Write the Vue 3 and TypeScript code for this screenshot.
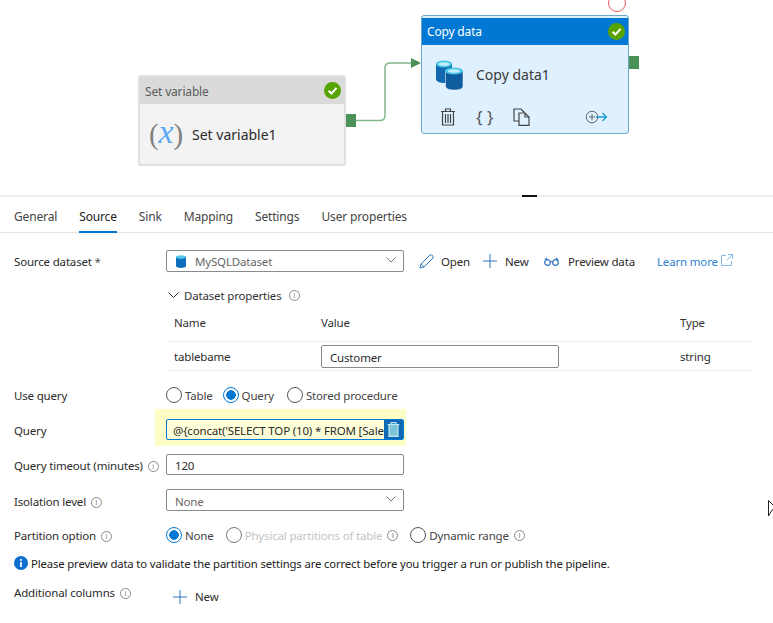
<script setup lang="ts">
const tabs = ['General', 'Source', 'Sink', 'Mapping', 'Settings', 'User properties']
const activeTab = 'Source'
const useQueryOptions = [
  { label: 'Table', checked: false },
  { label: 'Query', checked: true },
  { label: 'Stored procedure', checked: false },
]
</script>

<template>
  <div class="page">
    <section class="canvas">
      <svg class="wire" width="90" height="70" viewBox="0 0 90 70">
        <path d="M0 60.5 H24 Q29 60.5 29 55.5 V8 Q29 3 34 3 H56" fill="none" stroke="#7fb78b" stroke-width="1.5" />
        <path d="M55 -2 L65 3 L55 8 Z" fill="#4a9158" />
      </svg>
      <span class="port port-a"></span>
      <span class="port port-b"></span>
      <span class="red-ring"></span>

      <div class="node node-set">
        <div class="node-head">
          <span>Set variable</span>
          <svg class="ok" width="17" height="17" viewBox="0 0 17 17">
            <circle cx="8.5" cy="8.5" r="8.5" fill="#57a300" />
            <path d="M4.6 8.7 L7.4 11.5 L12.6 5.8" fill="none" stroke="#fff" stroke-width="2" />
          </svg>
        </div>
        <div class="node-body set-body">
          <span class="fx"><i class="paren">(</i><i class="x">x</i><i class="paren">)</i></span>
          <span class="node-name">Set variable1</span>
        </div>
      </div>

      <div class="node node-copy">
        <div class="node-head copy-head">
          <span>Copy data</span>
          <svg class="ok" width="17" height="17" viewBox="0 0 17 17">
            <circle cx="8.5" cy="8.5" r="8.5" fill="#57a300" />
            <path d="M4.6 8.7 L7.4 11.5 L12.6 5.8" fill="none" stroke="#fff" stroke-width="2" />
          </svg>
        </div>
        <div class="copy-body">
          <div class="copy-title">
            <svg width="28" height="30" viewBox="0 0 28 30">
              <path d="M0 4 V19 C0 22 5 23 8 23 C12 23 16 22 16 19 V4 Z" fill="#1268ae" />
              <ellipse cx="8" cy="4" rx="8" ry="3.4" fill="#48c7e6" />
              <ellipse cx="8" cy="4" rx="5.5" ry="1.8" fill="#c4eef8" />
              <path d="M9.500 11 V26 C9.500 29 14 30 18 30 C23 30 27 29 27 26 V11 Z" fill="#0f5c9e" stroke="#dff0fe" stroke-width="0.6" />
              <ellipse cx="18" cy="11" rx="9" ry="3.4" fill="#48c7e6" />
              <ellipse cx="18" cy="11" rx="6" ry="1.8" fill="#c4eef8" />
            </svg>
            <span class="node-name copy-name">Copy data1</span>
          </div>
          <div class="copy-actions">
            <svg width="16" height="18" viewBox="0 0 16 18" fill="none" stroke="#444" stroke-width="1.200">
              <path d="M1 3.500 H15 M5.500 3.500 V1 H10.500 V3.500 M2.500 3.500 V17 H13.500 V3.500 M5.500 6 V15 M8 6 V15 M10.500 6 V15" />
            </svg>
            <span class="braces">{ }</span>
            <svg class="copy-doc" width="17" height="18" viewBox="0 0 17 18" fill="none" stroke="#444" stroke-width="1.200">
              <path d="M1 1 H8 L11 4 V13 H1 Z" />
              <path d="M6 5 H12 L16 9 V17.300 H6 Z" fill="#dff0fe" />
              <path d="M12 5 V9 H16" />
            </svg>
            <svg class="add-out" width="23" height="14" viewBox="0 0 23 14" fill="none">
              <circle cx="7" cy="7" r="5.800" stroke="#666" />
              <path d="M4 7 H10 M7 4 V10" stroke="#666" />
              <path d="M11 7 H21 M17.500 3 L21.500 7 L17.500 11" stroke="#1a9bd0" stroke-width="1.300" />
            </svg>
          </div>
        </div>
      </div>
      <span class="resize-mark"></span>
    </section>

    <nav class="tabs">
      <span v-for="t in tabs" :key="t" class="tab" :class="{ active: t === activeTab }">{{ t }}</span>
    </nav>

    <div class="form">
      <div class="row row-source">
        <label>Source dataset <em>*</em></label>
        <div class="field select">
          <svg width="10" height="13" viewBox="0 0 10 13" class="sql-icon">
            <path d="M0 2 V11 C0 12.300 2.500 13 5 13 C7.500 13 10 12.300 10 11 V2 Z" fill="#0f6cbd" />
            <ellipse cx="5" cy="2" rx="5" ry="1.800" fill="#50c8e8" />
          </svg>
          <span class="muted">MySQLDataset</span>
          <svg class="chev" width="10" height="6" viewBox="0 0 10 6"><path d="M.5 .5 L5 5 L9.500 .5" fill="none" stroke="#777" /></svg>
        </div>
        <div class="actions">
          <span class="act act-open">
            <svg width="15" height="15" viewBox="0 0 15 15" fill="none" stroke="#2f74c0">
              <path d="M1 14 L2 10 L11 1 Q12 .3 13.500 1.500 Q14.500 3 14 4 L5 13 Z M2 10 L5 13" />
            </svg>
            Open
          </span>
          <span class="act act-new">
            <svg width="14" height="14" viewBox="0 0 14 14" stroke="#2f74c0"><path d="M7 0 V14 M0 7 H14" /></svg>
            New
          </span>
          <span class="act act-preview">
            <svg width="15" height="9" viewBox="0 0 15 9" fill="none" stroke="#2f74c0" stroke-width="1.200">
              <circle cx="3.500" cy="5.500" r="2.800" /><circle cx="11.500" cy="5.500" r="2.800" />
              <path d="M6.300 5 Q7.500 4 8.700 5 M1 3 L3 .8 M14 3 L12 .8" />
            </svg>
            Preview data
          </span>
          <span class="learn">
            Learn more
            <svg width="12" height="12" viewBox="0 0 12 12" fill="none" stroke="#8ab8e6">
              <path d="M5 1.500 H.5 V11.500 H10.500 V7 M7 .5 H11.500 V5 M11.500 .5 L6 6" />
            </svg>
          </span>
        </div>
      </div>

      <div class="ds-toggle">
        <svg width="11" height="7" viewBox="0 0 11 7"><path d="M.5 .5 L5.500 5.500 L10.500 .5" fill="none" stroke="#333" /></svg>
        <span>Dataset properties</span>
        <i class="info">i</i>
      </div>

      <div class="props">
        <div class="props-row props-head">
          <span class="c-name">Name</span><span class="c-value">Value</span><span>Type</span>
        </div>
        <div class="props-row props-data">
          <span class="c-name">tablebame</span>
          <span class="c-value"><span class="field value-input">Customer</span></span>
          <span>string</span>
        </div>
      </div>

      <div class="row row-use">
        <label>Use query</label>
        <div class="radios">
          <span v-for="o in useQueryOptions" :key="o.label" class="radio" :class="{ on: o.checked }">
            <b></b>{{ o.label }}
          </span>
        </div>
      </div>

      <div class="row row-query">
        <label>Query</label>
        <div class="query-wrap">
          <div class="field query-input">
            <span class="query-text">@{concat('SELECT TOP (10) * FROM [SalesLT].[Customer]')}</span>
            <span class="query-del">
              <svg width="13" height="15" viewBox="0 0 13 15" fill="none" stroke="#bfe6f2" stroke-width="1.200">
                <path d="M.5 2.500 H12.500 M4 2.500 V.6 H9 V2.500" />
                <path d="M2 2.500 V14.400 H11 V2.500 Z" fill="#7cc6d8" />
              </svg>
            </span>
          </div>
        </div>
      </div>

      <div class="row row-timeout">
        <label>Query timeout (minutes) <i class="info">i</i></label>
        <div class="field plain">120</div>
      </div>

      <div class="row row-iso">
        <label>Isolation level <i class="info">i</i></label>
        <div class="field select iso">
          <span class="muted">None</span>
          <svg class="chev" width="10" height="6" viewBox="0 0 10 6"><path d="M.5 .5 L5 5 L9.500 .5" fill="none" stroke="#777" /></svg>
        </div>
      </div>

      <div class="row row-part">
        <label>Partition option <i class="info">i</i></label>
        <div class="radios">
          <span class="radio on"><b></b>None</span>
          <span class="radio off"><b></b>Physical partitions of table <i class="info">i</i></span>
          <span class="radio"><b></b>Dynamic range <i class="info">i</i></span>
        </div>
      </div>

      <div class="notice">
        <svg width="14" height="14" viewBox="0 0 14 14">
          <circle cx="7" cy="7" r="7" fill="#0f6fd0" />
          <path d="M7 3 V4.800 M7 6 V11" stroke="#fff" stroke-width="1.800" />
        </svg>
        <span>Please preview data to validate the partition settings are correct before you trigger a run or publish the pipeline.</span>
      </div>

      <div class="row row-extra">
        <label>Additional columns <i class="info">i</i></label>
        <span class="act add-col">
          <svg width="14" height="14" viewBox="0 0 14 14" stroke="#2f74c0"><path d="M7 0 V14 M0 7 H14" /></svg>
          New
        </span>
      </div>
    </div>

    <svg class="cursor" width="9" height="19" viewBox="0 0 9 19" fill="#fff" stroke="#222">
      <path d="M.5 .5 L9 9 L4 10 L.5 16 Z" />
    </svg>
  </div>
</template>

<style scoped>
.page {
  position: relative;
  width: 773px;
  height: 623px;
  overflow: hidden;
  background: #fff;
  color: #2b2b2b;
  font-family: "Noto Sans", "Open Sans", sans-serif;
  font-size: 11.5px;
  letter-spacing: -0.17px;
}

/* canvas */
.canvas {
  position: relative;
  height: 195px;
  border-bottom: 2px solid #eeeeee;
  box-sizing: content-box;
}

.wire {
  position: absolute;
  left: 356px;
  top: 60px;
  overflow: visible;
}

.port {
  position: absolute;
  width: 10px;
  height: 13px;
  background: #4a9158;
}
.port-a { left: 346px; top: 114px; }
.port-b { left: 629px; top: 56px; }

.red-ring {
  position: absolute;
  left: 608px;
  top: -6px;
  width: 16px;
  height: 16px;
  border: 1.500px solid #ee5a60;
  border-radius: 50%;
}

.node {
  position: absolute;
  box-sizing: border-box;
  width: 208px;
  border-radius: 3px;
  overflow: hidden;
}

.node-head {
  display: flex;
  align-items: center;
  justify-content: space-between;
  padding: 0 3px 0 5px;
  font-size: 12px;
}

.node-set {
  left: 138px;
  top: 75px;
  height: 91px;
  border: 2px solid #e0e0e0;
  background: #f3f3f3;
}
.node-set .node-head {
  height: 27px;
  background: #dadada;
  color: #5a5a5a;
}
.node-set .node-head span { padding-top: 2px; }

.set-body {
  display: flex;
  align-items: center;
  height: 60px;
  padding-left: 9px;
}

.fx {
  display: flex;
  align-items: center;
  width: 43px;
  font-family: "Liberation Serif", serif;
  font-size: 29px;
  font-style: italic;
}
.paren { color: #808080; font-style: normal; }
.x { color: #5ca8f5; font-size: 34px; line-height: 30px; margin-top: -5px; }

.node-name {
  font-size: 14px;
  letter-spacing: 0;
  color: #2b2b2b;
}

.node-copy {
  left: 421px;
  top: 15px;
  height: 119px;
  border: 1.500px solid #6aa9c9;
  background: #dff0fe;
}

.copy-head {
  height: 27px;
  margin-top: 1.500px;
  background: #0078d4;
  color: #fff;
}

.copy-body {
  display: flex;
  flex-direction: column;
  padding: 15px 0 0 14px;
}

.copy-title {
  display: flex;
  align-items: center;
  gap: 12px;
}
.copy-name { color: #3a3a3a; margin-top: -1px; }

.copy-actions {
  display: flex;
  align-items: center;
  margin-top: 18px;
  padding-left: 4px;
}
.braces {
  margin-left: 20px;
  width: 18px;
  font-size: 17px;
  line-height: 18px;
  letter-spacing: 0;
  white-space: nowrap;
  color: #555;
}
.copy-doc { margin-left: 19px; }
.add-out { margin-left: 55px; }

.resize-mark {
  position: absolute;
  left: 522px;
  bottom: -2px;
  width: 15px;
  height: 2px;
  background: #111;
}

/* tabs */
.tabs {
  display: flex;
  gap: 22px;
  height: 35px;
  padding-left: 14px;
  border-bottom: 1px solid #e4e4e4;
  box-sizing: content-box;
}
.tab {
  display: flex;
  align-items: center;
  height: 33px;
  padding-top: 6px;
  box-sizing: border-box;
  font-size: 12px;
  letter-spacing: -0.15px;
  color: #444;
}
.tab.active {
  height: 36px;
  padding-top: 5px;
  border-bottom: 2px solid #0078d4;
  color: #222;
}

/* form */
.form {
  padding: 17px 0 0 14px;
}

.row {
  display: flex;
  align-items: center;
}
.row label {
  width: 152px;
  flex: none;
}
.row label em {
  font-style: normal;
  color: #555;
}

.field {
  display: flex;
  align-items: center;
  box-sizing: border-box;
  width: 238px;
  height: 22px;
  padding: 0 8px;
  border: 1px solid #8a8a8a;
  border-radius: 2px;
  background: #fff;
}

.muted { color: #666; }

.select { position: relative; }
.sql-icon { margin-right: 9px; margin-left: 1px; }
.chev {
  position: absolute;
  right: 7px;
  top: 6px;
}

.actions {
  display: flex;
  align-items: center;
  margin-left: 15px;
}
.act {
  display: inline-flex;
  align-items: center;
  gap: 7px;
}
.act-open { width: 64px; }
.act-new { width: 61px; gap: 8px; }
.act-preview { width: 113px; gap: 9px; }
.learn {
  display: inline-flex;
  align-items: flex-start;
  gap: 3px;
  color: #2f7fd0;
}

.ds-toggle {
  display: flex;
  align-items: center;
  gap: 5px;
  height: 16px;
  margin: 15px 0 0 154px;
}
.ds-toggle span { color: #333; }

.info {
  display: inline-flex;
  align-items: center;
  justify-content: center;
  box-sizing: border-box;
  width: 11px;
  height: 11px;
  border: 1px solid #888;
  border-radius: 50%;
  color: #777;
  font-style: normal;
  font-size: 7px;
  line-height: 1;
  margin-left: 2px;
  vertical-align: 1px;
}

.props {
  width: 586px;
  margin: 10px 0 0 152px;
}
.props-row {
  display: flex;
  align-items: center;
  padding-left: 8px;
}
.props-head {
  height: 29px;
  padding-bottom: 9px;
  box-sizing: border-box;
  border-bottom: 1px solid #eeeeee;
  color: #333;
}
.props-data {
  height: 29px;
  box-sizing: border-box;
  border-bottom: 1px solid #eeeeee;
}
.c-name { width: 147px; flex: none; }
.c-value { width: 359px; flex: none; }
.value-input {
  width: 238px;
  height: 23px;
}

.row-use {
  height: 16px;
  margin-top: 16px;
}

.radios {
  display: flex;
  align-items: center;
}
.radio {
  display: inline-flex;
  align-items: center;
  gap: 3px;
  margin-right: 13px;
  white-space: nowrap;
  color: #444;
}
.radio b {
  box-sizing: border-box;
  width: 16px;
  height: 16px;
  border: 1px solid #555;
  border-radius: 50%;
  flex: none;
}
.radio.on b {
  border-color: #0078d4;
  background: radial-gradient(circle, #0078d4 0 4.500px, #fff 5px);
}
.radio.off { color: #c4c4c4; }
.radio.off b { border-color: #777; }
.row-part .radio { margin-right: 12px; }
.row-part .radio.off .info { color: #666; }
.row-use .radio:first-child { margin-right: 10px; }

.row-query {
  height: 37px;
  margin-top: 6px;
  align-items: flex-end;
}
.row-query label {
  width: 141px;
  padding-bottom: 8px;
}
.query-wrap {
  display: flex;
  align-items: flex-end;
  width: 251px;
  height: 37px;
  padding: 0 0 6px 11px;
  box-sizing: border-box;
  background: #fdfdc7;
}
.query-input {
  position: relative;
  overflow: hidden;
  border: 1px solid #0078d4;
  background: #feffd9;
  height: 21px;
  padding: 2px 0 0 6px;
  white-space: nowrap;
}
.query-text { color: #2b2b2b; }
.query-del {
  position: absolute;
  right: 0;
  top: 0;
  bottom: 0;
  display: flex;
  align-items: center;
  justify-content: center;
  width: 19px;
  background: #0f6ab4;
}

.row-timeout {
  margin-top: 8px;
}
.row-timeout label,
.row-iso label { padding-top: 2px; }
.plain { height: 21px; padding-top: 2px; }

.row-iso { margin-top: 14px; }
.iso { height: 22px; padding-top: 2px; }
.value-input { padding-top: 2px; }

.row-part {
  height: 16px;
  margin-top: 16px;
}
.row-part label { flex: none; }

.notice {
  display: flex;
  align-items: center;
  gap: 3px;
  height: 16px;
  margin-top: 12px;
  font-size: 11.300px;
  letter-spacing: -0.13px;
  white-space: nowrap;
  color: #222;
}

.row-extra {
  height: 18px;
  margin-top: 14px;
  align-items: flex-start;
}
.add-col {
  margin: 4px 0 0 7px;
  gap: 8px;
}

.cursor {
  position: absolute;
  left: 768px;
  top: 500px;
}
</style>

<style>
html, body { background: #fff; }
</style>
